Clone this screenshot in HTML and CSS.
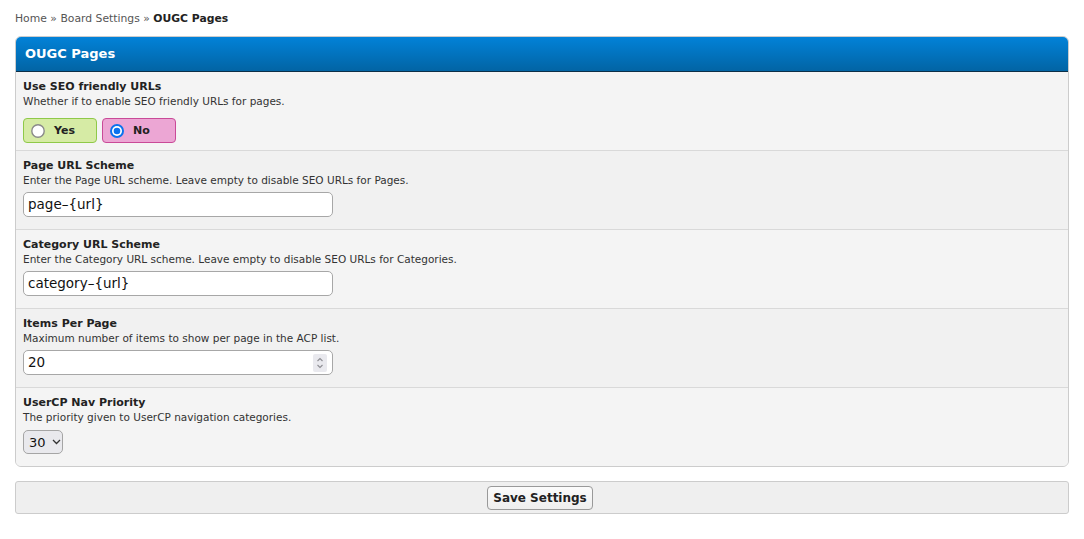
FILE: index.html
```html
<!DOCTYPE html>
<html>
<head>
<meta charset="utf-8">
<link rel="stylesheet" href="styles.css">
</head>
<body>
<div class="breadcrumb"><a>Home</a> » <a>Board Settings</a> » <b>OUGC Pages</b></div>

<div class="panel">
  <div class="panel-head">OUGC Pages</div>

  <div class="row">
    <div class="title">Use SEO friendly URLs</div>
    <div class="desc">Whether if to enable SEO friendly URLs for pages.</div>
    <div class="radios">
      <label class="opt opt-yes">
        <svg class="radio" width="14" height="14" viewBox="0 0 14 14"><circle cx="7" cy="7" r="6.2" fill="#fff" stroke="#8a8a8a" stroke-width="1.4"/></svg>
        <span>Yes</span>
      </label>
      <label class="opt opt-no">
        <svg class="radio" width="14" height="14" viewBox="0 0 14 14"><circle cx="7" cy="7" r="7" fill="#0a72ee"/><circle cx="7" cy="7" r="5" fill="#fff"/><circle cx="7" cy="7" r="3.3" fill="#0a72ee"/></svg>
        <span>No</span>
      </label>
    </div>
  </div>

  <div class="row alt">
    <div class="title">Page URL Scheme</div>
    <div class="desc">Enter the Page URL scheme. Leave empty to disable SEO URLs for Pages.</div>
    <div class="ctrl"><div class="textbox">page–{url}</div></div>
  </div>

  <div class="row">
    <div class="title">Category URL Scheme</div>
    <div class="desc">Enter the Category URL scheme. Leave empty to disable SEO URLs for Categories.</div>
    <div class="ctrl"><div class="textbox">category–{url}</div></div>
  </div>

  <div class="row alt">
    <div class="title">Items Per Page</div>
    <div class="desc">Maximum number of items to show per page in the ACP list.</div>
    <div class="ctrl">
      <div class="textbox numbox">20
        <span class="spinner"><svg width="14" height="18" viewBox="0 0 14 18"><path d="M4.5 7 L7 4.5 L9.5 7" fill="none" stroke="#8d8d93" stroke-width="1.1"/><path d="M4.5 11 L7 13.5 L9.5 11" fill="none" stroke="#8d8d93" stroke-width="1.1"/></svg></span>
      </div>
    </div>
  </div>

  <div class="row last">
    <div class="title">UserCP Nav Priority</div>
    <div class="desc">The priority given to UserCP navigation categories.</div>
    <div class="ctrl">
      <div class="selectbox"><span>30</span><svg width="9" height="6" viewBox="0 0 9 6"><path d="M1 1 L4.5 4.5 L8 1" fill="none" stroke="#333" stroke-width="1.3"/></svg></div>
    </div>
  </div>
</div>

<div class="submitbar">
  <button class="btn">Save Settings</button>
</div>
</body>
</html>
```

FILE: styles.css
```css
html, body {
  margin: 0;
  padding: 0;
  background: #fff;
}
body {
  font-family: "DejaVu Sans", Verdana, sans-serif;
  color: #222;
  padding: 0 15px;
}
.breadcrumb {
  font-size: 10.8px;
  line-height: 14px;
  color: #555;
  padding-top: 12px;
  margin-bottom: 10px;
}
.breadcrumb a { color: #555; }
.breadcrumb b { color: #222; }

.panel {
  border: 1px solid #ccc;
  border-radius: 6px;
  overflow: hidden;
  background: #f4f4f4;
}
.panel-head {
  height: 34px;
  line-height: 34px;
  border-bottom: 1px solid #0c2f47;
  background: linear-gradient(#0282d8, #0264a4);
  color: #fff;
  font-weight: bold;
  font-size: 13px;
  padding-left: 9px;
}
.row {
  height: 79px;
  box-sizing: border-box;
  padding: 7px 7px 0;
  background: #f4f4f4;
  border-bottom: 1px solid #d9d9d9;
}
.row.alt { background: #f1f1f1; }
.row.last { border-bottom: none; height: 78px; }
.title {
  font-weight: bold;
  font-size: 11px;
  line-height: 15px;
  color: #222;
}
.desc {
  font-size: 10.5px;
  line-height: 14px;
  color: #333;
}
.radios {
  display: flex;
  gap: 5px;
  margin-top: 10px;
}
.opt {
  display: flex;
  align-items: center;
  box-sizing: border-box;
  width: 74px;
  height: 25px;
  border-radius: 4px;
  padding-left: 7px;
  font-weight: bold;
  font-size: 11px;
  color: #222;
}
.opt .radio { margin-right: 9px; }
.opt-yes {
  background: #d6eba5;
  border: 1px solid #8fc949;
}
.opt-no {
  background: #eca6d4;
  border: 1px solid #c94a98;
}
.ctrl {
  margin-top: 5px;
}
.textbox {
  position: relative;
  box-sizing: border-box;
  width: 310px;
  height: 25px;
  line-height: 23px;
  background: #fff;
  border: 1px solid #a7a7a7;
  border-radius: 5px;
  padding-left: 4px;
  font-size: 13.5px;
  color: #111;
}
.spinner {
  position: absolute;
  right: 5px;
  top: 3px;
  width: 14px;
  height: 18px;
  background: #e9e9ee;
  border-radius: 2px;
  display: flex;
}
.selectbox {
  display: inline-flex;
  align-items: center;
  box-sizing: border-box;
  width: 40px;
  height: 24px;
  border: 1px solid #a5a5a5;
  border-radius: 5px;
  background: #e9e9ed;
  padding-left: 5px;
  gap: 6px;
  font-size: 13px;
  color: #111;
  margin-top: 1px;
}
.submitbar {
  margin-top: 14px;
  height: 33px;
  box-sizing: border-box;
  border: 1px solid #ccc;
  border-radius: 3px;
  background: #efefef;
  display: flex;
  justify-content: center;
  align-items: center;
}
.btn {
  font-family: "DejaVu Sans", Verdana, sans-serif;
  font-weight: bold;
  font-size: 12px;
  color: #222;
  height: 24px;
  width: 106px;
  padding: 0;
  margin-right: 4px;
  background: linear-gradient(#fbfbfb, #eeeeee);
  border: 1px solid #999;
  border-radius: 4px;
}
```
